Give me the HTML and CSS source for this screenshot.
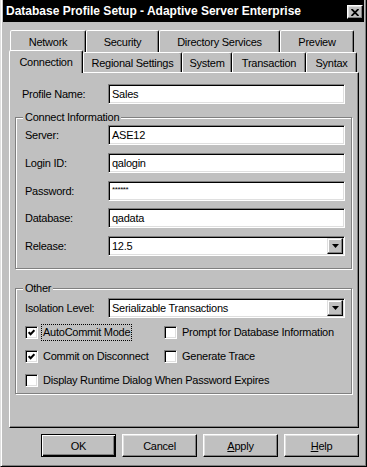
FILE: index.html
```html
<!DOCTYPE html>
<html lang="en">
<head>
    <meta charset="UTF-8">
    <title>Database Profile Setup</title>
    <link rel="stylesheet" href="styles.css">
</head>
<body>
<div class="window">
    <div class="titlebar">
        <span class="title">Database Profile Setup - Adaptive Server Enterprise</span>
        <span class="close">
            <svg width="8" height="7" viewBox="0 0 8 7"><path d="M0.5 0 L7.5 7 M7.5 0 L0.5 7" stroke="#000" stroke-width="1.8"/></svg>
        </span>
    </div>
    <div class="content">
        <!-- two rows of tabs, the selected one sits in the front row -->
        <div class="tab-row back">
            <div class="tab t-network">Network</div>
            <div class="tab t-security">Security</div>
            <div class="tab t-directory">Directory Services</div>
            <div class="tab t-preview">Preview</div>
        </div>
        <div class="tab-row front">
            <div class="tab selected t-connection">Connection</div>
            <div class="tab t-regional">Regional Settings</div>
            <div class="tab t-system">System</div>
            <div class="tab t-transaction">Transaction</div>
            <div class="tab t-syntax">Syntax</div>
        </div>

        <div class="panel">
            <div class="row profile-row">
                <label class="lbl">Profile Name:</label>
                <div class="field">Sales</div>
            </div>

            <div class="group group-connect">
                <div class="group-title">Connect Information</div>
                <div class="row">
                    <label class="lbl">Server:</label>
                    <div class="field">ASE12</div>
                </div>
                <div class="row">
                    <label class="lbl">Login ID:</label>
                    <div class="field">qalogin</div>
                </div>
                <div class="row">
                    <label class="lbl">Password:</label>
                    <div class="field"><span class="stars">******</span></div>
                </div>
                <div class="row tight">
                    <label class="lbl">Database:</label>
                    <div class="field">qadata</div>
                </div>
                <div class="row">
                    <label class="lbl">Release:</label>
                    <div class="field combo">
                        <span>12.5</span>
                        <span class="drop"><svg width="7" height="4" viewBox="0 0 7 4"><path d="M0 0 H7 L3.5 4 Z" fill="#000"/></svg></span>
                    </div>
                </div>
            </div>

            <div class="group group-other">
                <div class="group-title">Other</div>
                <div class="row">
                    <label class="lbl">Isolation Level:</label>
                    <div class="field combo">
                        <span>Serializable Transactions</span>
                        <span class="drop"><svg width="7" height="4" viewBox="0 0 7 4"><path d="M0 0 H7 L3.5 4 Z" fill="#000"/></svg></span>
                    </div>
                </div>
                <div class="checks">
                    <div class="check-row">
                        <div class="check-col first">
                            <span class="box"><svg width="7" height="7" viewBox="0 0 7 7"><path d="M0.6 3.2 L2.6 5.2 L6.4 1.2" stroke="#000" stroke-width="2" fill="none"/></svg></span>
                            <span class="check-label focus">AutoCommit Mode</span>
                        </div>
                        <div class="check-col">
                            <span class="box"></span>
                            <span class="check-label">Prompt for Database Information</span>
                        </div>
                    </div>
                    <div class="check-row">
                        <div class="check-col first">
                            <span class="box"><svg width="7" height="7" viewBox="0 0 7 7"><path d="M0.6 3.2 L2.6 5.2 L6.4 1.2" stroke="#000" stroke-width="2" fill="none"/></svg></span>
                            <span class="check-label">Commit on Disconnect</span>
                        </div>
                        <div class="check-col">
                            <span class="box"></span>
                            <span class="check-label">Generate Trace</span>
                        </div>
                    </div>
                    <div class="check-row">
                        <div class="check-col">
                            <span class="box"></span>
                            <span class="check-label">Display Runtime Dialog When Password Expires</span>
                        </div>
                    </div>
                </div>
            </div>
        </div>

        <div class="buttons">
            <button type="button" class="btn default">OK</button>
            <button type="button" class="btn">Cancel</button>
            <button type="button" class="btn"><u>A</u>pply</button>
            <button type="button" class="btn"><u>H</u>elp</button>
        </div>
    </div>
</div>
</body>
</html>
```

FILE: styles.css
```css
body{
    margin: 0;
    background-color: #c0c0c0;
    font-family: "Liberation Sans", Arial, sans-serif;
    font-size: 11px;
    letter-spacing: -0.25px;
    color: #000;
}

.window{
    width: 367px;
    height: 467px;
    box-sizing: border-box;
    background-color: #c0c0c0;
    border-left: 1px solid #dfdfdf;
    border-right: 1px solid #000;
    border-bottom: 1px solid #000;
    box-shadow: inset 1px 0 #fff, inset -1px -1px #808080;
    padding: 0 2px 2px 2px;
}

.titlebar{
    height: 22px;
    background-color: #000;
    color: #fff;
    display: flex;
    align-items: center;
    justify-content: space-between;
    padding: 0 1px 0 3px;
    font-size: 12px;
    font-weight: bold;
    letter-spacing: 0;
}
.close{
    width: 16px;
    height: 14px;
    box-sizing: border-box;
    margin-top: 2px;
    background-color: #c0c0c0;
    border: 1px solid;
    border-color: #fff #000 #000 #fff;
    box-shadow: inset -1px -1px #808080, inset 1px 1px #dfdfdf;
    display: flex;
    align-items: center;
    justify-content: center;
}
.close svg{
    display: block;
}

.content{
    padding: 8px 0 0 6px;
}

/* tabs */
.tab-row{
    display: flex;
}
.tab-row.back{
    height: 22px;
    margin-left: 1px;
}
.tab-row.front{
    height: 20px;
    align-items: flex-end;
}
.tab{
    box-sizing: border-box;
    height: 100%;
    display: flex;
    align-items: center;
    justify-content: center;
    border: 1px solid;
    border-bottom: none;
    border-color: #fff #000 transparent #fff;
    border-radius: 2px 2px 0 0;
    box-shadow: inset -1px 0 #808080;
    background-color: #c0c0c0;
}
.tab.selected{
    height: 23px;
    margin-bottom: -1px;
    position: relative;
    z-index: 1;
}
.t-network{ width: 76px; }
.t-security{ width: 73px; }
.t-directory{ width: 121px; }
.t-preview{ width: 74px; }
.t-connection{ width: 74px; }
.t-regional{ width: 99px; }
.t-system{ width: 50px; }
.t-transaction{ width: 74px; }
.t-syntax{ width: 51px; }

.panel{
    width: 350px;
    height: 356px;
    box-sizing: border-box;
    border: 1px solid;
    border-color: #fff #000 #000 #fff;
    box-shadow: inset -1px -1px #808080;
    padding: 0 6px 0 5px;
}

/* label + edit rows */
.row{
    display: flex;
    align-items: center;
    height: 20px;
}
.row + .row{
    margin-top: 8px;
}
.row.tight{
    margin-top: 7px;
}
.lbl{
    width: 83px;
    flex: none;
}
.profile-row{
    margin-top: 11px;
    padding: 0 7px;
}
.profile-row .lbl{
    width: 86px;
}
.field{
    flex: 1;
    height: 20px;
    box-sizing: border-box;
    background-color: #fff;
    border: 1px solid;
    border-color: #808080 #fff #fff #808080;
    box-shadow: inset 1px 1px #000, inset -1px -1px #dfdfdf;
    padding-left: 3px;
    display: flex;
    align-items: center;
}
.stars{
    font-size: 8px;
    letter-spacing: -0.4px;
    margin-top: -3px;
}
.field.combo{
    padding-right: 1px;
    justify-content: space-between;
}
.drop{
    width: 16px;
    height: 16px;
    box-sizing: border-box;
    background-color: #c0c0c0;
    border: 1px solid;
    border-color: #dfdfdf #000 #000 #dfdfdf;
    box-shadow: inset -1px -1px #808080, inset 1px 1px #fff;
    display: flex;
    align-items: center;
    justify-content: center;
}
.drop svg{
    display: block;
}

/* group boxes */
.group{
    border: 1px solid #808080;
    box-shadow: 1px 1px #fff, inset 1px 1px #fff;
    padding: 0 6px 12px 9px;
}
.group-connect{
    margin-top: 13px;
}
.group-other{
    margin-top: 19px;
    padding-bottom: 4px;
}
.group-title{
    width: max-content;
    line-height: 13px;
    margin: -7px 0 1px -2px;
    padding: 0 2px;
    background-color: #c0c0c0;
}
.group-other .group-title{
    margin-bottom: 3px;
}

/* check boxes */
.checks{
    margin-top: 6px;
}
.check-row{
    display: flex;
    align-items: center;
    height: 17px;
}
.check-row + .check-row{
    margin-top: 7px;
}
.check-col{
    display: flex;
    align-items: center;
}
.check-col.first{
    width: 139px;
}
.box{
    width: 13px;
    height: 13px;
    flex: none;
    box-sizing: border-box;
    background-color: #fff;
    border: 1px solid;
    border-color: #808080 #fff #fff #808080;
    box-shadow: inset 1px 1px #000, inset -1px -1px #dfdfdf;
    margin-right: 3px;
    display: flex;
    align-items: center;
    justify-content: center;
}
.box svg{
    display: block;
}
.check-label{
    border: 1px dotted transparent;
    padding: 0 1px;
    line-height: 15px;
}
.check-label.focus{
    border-color: #000;
}

/* dialog buttons */
.buttons{
    display: flex;
    justify-content: flex-end;
    gap: 6px;
    margin-top: 6px;
    padding-right: 5px;
}
.btn{
    width: 75px;
    height: 23px;
    box-sizing: border-box;
    margin: 0;
    padding: 0;
    background-color: #c0c0c0;
    font-family: "Liberation Sans", Arial, sans-serif;
    font-size: 11px;
    letter-spacing: -0.25px;
    color: #000;
    border: 1px solid;
    border-color: #fff #000 #000 #fff;
    box-shadow: inset -1px -1px #808080, inset 1px 1px #dfdfdf;
    border-radius: 0;
}
.btn.default{
    border-color: #000;
    box-shadow: inset 1px 1px #fff, inset -1px -1px #000, inset -2px -2px #808080;
}
```
